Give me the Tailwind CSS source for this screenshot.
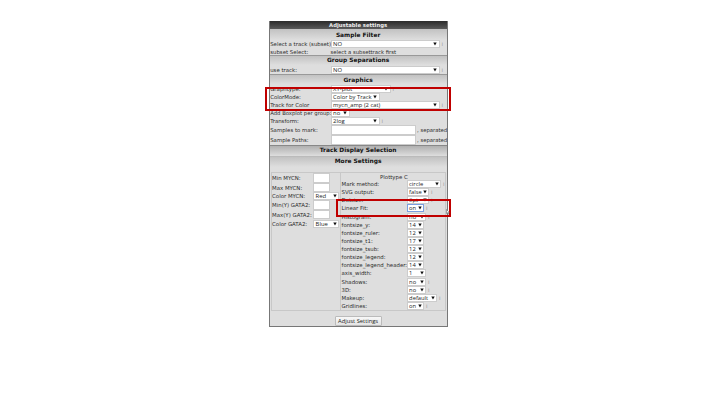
<!DOCTYPE html>
<html lang="en"><head><meta charset="utf-8"><title>Adjustable settings</title>
<script src="https://cdn.jsdelivr.net/npm/@tailwindcss/browser@4"></script></head>
<body class="bg-white w-[720px] h-[416px] overflow-hidden relative font-['DejaVu_Sans',sans-serif] text-[5.4px] leading-[8px] text-[#2c2c2c] whitespace-nowrap">
<svg width="0" height="0" class="absolute"><defs><symbol id="arrow" viewBox="0 0 4 4"><path d="M.3 .6H3.7L2 3.6Z" fill="#111"/></symbol></defs></svg>
<main class="ml-[268.6px] mt-[21px] w-[179px] h-[306px] border-x border-b border-[#777] bg-[#dedede] flex flex-col">
<h1 class="h-[8px] shrink-0 bg-linear-to-b from-[#2b2b2b] to-[#5a5a5a] text-[#eee] text-[5.3px] font-bold text-center leading-[9px]">Adjustable settings</h1>
<h2 class="h-[11px] shrink-0 bg-linear-to-b from-[#c2c2c2] to-[#dedede] text-[#111] text-[5.9px] font-bold text-center leading-[12px]">Sample Filter</h2>
<section class="h-[15px] shrink-0">
<div class="flex h-[8px] items-center"><label class="w-[61px] shrink-0 pl-[.6px]">Select a track (subset)</label><span class="w-[109px] h-[8px] shrink-0 bg-white border border-[#ccc] flex items-center justify-between pl-[1.5px] pr-[2px] text-[#222]"><b class="font-normal font-['Open_Sans',sans-serif] text-[5.9px]">NO</b><svg width="4" height="4"><use href="#arrow"/></svg></span><i class="not-italic text-[#999] pl-[2px]">i</i></div>
<div class="flex h-[7px] items-center"><span class="w-[61px] shrink-0 pl-[.6px]">subset Select:</span><span class="text-[5.3px]">select a subsettrack first</span></div>
</section>
<h2 class="h-[10px] shrink-0 border-t border-[#999] bg-linear-to-b from-[#c2c2c2] to-[#dedede] text-[#111] text-[5.9px] font-bold text-center leading-[9px]">Group Separations</h2>
<section class="h-[9px] shrink-0">
<div class="flex h-[9px] items-center"><label class="w-[61px] shrink-0 pl-[.6px]">use track:</label><span class="w-[109px] h-[8px] shrink-0 bg-white border border-[#ccc] flex items-center justify-between pl-[1.5px] pr-[2px] text-[#222]"><b class="font-normal font-['Open_Sans',sans-serif] text-[5.9px]">NO</b><svg width="4" height="4"><use href="#arrow"/></svg></span><i class="not-italic text-[#999] pl-[2px]">i</i></div>
</section>
<h2 class="h-[10px] shrink-0 border-t border-[#999] bg-linear-to-b from-[#c2c2c2] to-[#dedede] text-[#111] text-[5.9px] font-bold text-center leading-[10px]">Graphics</h2>
<section class="h-[61px] shrink-0 pt-px">
<div class="flex h-[8px] items-center"><label class="w-[61px] shrink-0 pl-[.6px]">Graphtype:</label><span class="w-[60px] h-[8px] shrink-0 bg-white border border-[#ccc] flex items-center justify-between pl-[1.5px] pr-[2px] text-[#222]"><b class="font-normal font-['Open_Sans',sans-serif] text-[5.9px]">XY-plot</b><svg width="4" height="4"><use href="#arrow"/></svg></span><i class="not-italic text-[#999] pl-[2px]">i</i></div>
<div class="flex h-[8px] items-center"><label class="w-[61px] shrink-0 pl-[.6px]">ColorMode:</label><span class="w-[49px] h-[8px] shrink-0 bg-white border border-[#ccc] flex items-center justify-between pl-[1.5px] pr-[2px] text-[#222]"><b class="font-normal font-['Open_Sans',sans-serif] text-[5.8px]">Color by Track</b><svg class="shrink-0" width="4" height="4"><use href="#arrow"/></svg></span></div>
<div class="flex h-[8px] items-center"><label class="w-[61px] shrink-0 pl-[.6px]">Track for Color</label><span class="w-[109px] h-[8px] shrink-0 bg-white border border-[#ccc] flex items-center justify-between pl-[1.5px] pr-[2px] text-[#222]"><b class="font-normal font-['Open_Sans',sans-serif] text-[5.8px]">mycn_amp (2 cat)</b><svg width="4" height="4"><use href="#arrow"/></svg></span><i class="not-italic text-[#999] pl-[2px]">i</i></div>
<div class="flex h-[8px] items-center"><label class="w-[61px] shrink-0 pl-[.6px] text-[5.3px]">Add Boxplot per group:</label><span class="w-[19px] h-[8px] shrink-0 bg-white border border-[#ccc] flex items-center justify-between pl-[1.5px] pr-[2px] text-[#222]"><b class="font-normal font-['Open_Sans',sans-serif] text-[5.9px]">no</b><svg width="4" height="4"><use href="#arrow"/></svg></span></div>
<div class="flex h-[8px] items-center"><label class="w-[61px] shrink-0 pl-[.6px]">Transform:</label><span class="w-[49px] h-[8px] shrink-0 bg-white border border-[#ccc] flex items-center justify-between pl-[1.5px] pr-[2px] text-[#222]"><b class="font-normal font-['Open_Sans',sans-serif] text-[5.9px]">2log</b><svg width="4" height="4"><use href="#arrow"/></svg></span><i class="not-italic text-[#999] pl-[2px]">i</i></div>
<div class="flex h-[10px] items-center"><label class="w-[61px] shrink-0 pl-[.6px]">Samples to mark:</label><span class="w-[85px] h-[10px] shrink-0 bg-white border border-[#ccc]"></span><span class="pl-[1.5px] text-[5.3px]">, separated</span></div>
<div class="flex h-[10px] items-center"><label class="w-[61px] shrink-0 pl-[.6px]">Sample Paths:</label><span class="w-[85px] h-[10px] shrink-0 bg-white border border-[#ccc]"></span><span class="pl-[1.5px] text-[5.3px]">, separated</span></div>
</section>
<h2 class="h-[11px] shrink-0 border-t border-[#888] bg-linear-to-b from-[#b0b0b0] to-[#dedede] text-[#111] text-[5.9px] font-bold text-center leading-[9px]">Track Display Selection</h2>
<h2 class="h-[11px] shrink-0 border-t border-[#bbb] bg-linear-to-b from-[#c2c2c2] to-[#dedede] text-[#111] text-[5.9px] font-bold text-center leading-[9px]">More Settings</h2>
<div class="mt-[5px] ml-[1.5px] w-[175px] h-[139px] shrink-0 border border-[#c8c8c8] flex">
<section class="w-[68px] shrink-0">
<div class="flex h-[10px] items-center"><label class="w-[41px] shrink-0">Min MYCN:</label><span class="w-[17px] h-[10px] shrink-0 bg-white border border-[#ccc]"></span></div>
<div class="flex h-[9px] items-center"><label class="w-[41px] shrink-0">Max MYCN:</label><span class="w-[17px] h-[9px] shrink-0 bg-white border border-[#ccc]"></span></div>
<div class="flex h-[8px] items-center"><label class="w-[41px] shrink-0">Color MYCN:</label><span class="w-[26px] h-[8px] shrink-0 bg-white border border-[#ccc] flex items-center justify-between pl-[1.5px] pr-px text-[#222]"><b class="font-normal font-['Open_Sans',sans-serif] text-[5.9px]">Red</b><svg width="4" height="4"><use href="#arrow"/></svg></span></div>
<div class="flex h-[10px] items-center"><label class="w-[41px] shrink-0">Min(Y) GATA2:</label><span class="w-[17px] h-[10px] shrink-0 bg-white border border-[#ccc]"></span></div>
<div class="flex h-[9px] items-center"><label class="w-[41px] shrink-0">Max(Y) GATA2:</label><span class="w-[17px] h-[9px] shrink-0 bg-white border border-[#ccc]"></span></div>
<div class="flex h-[9px] items-center"><label class="w-[41px] shrink-0">Color GATA2:</label><span class="w-[26px] h-[8px] shrink-0 bg-white border border-[#ccc] flex items-center justify-between pl-[1.5px] pr-px text-[#222]"><b class="font-normal font-['Open_Sans',sans-serif] text-[5.9px]">Blue</b><svg width="4" height="4"><use href="#arrow"/></svg></span></div>
</section>
<section id="plot" class="w-[105px] shrink-0 border-l border-[#c8c8c8]">
<h3 class="h-[7px] pl-[39px]">Plottype C</h3>
</section></div>
<button class="block mx-auto mt-[5px] w-[47px] h-[10px] shrink-0 border border-[#bbb] rounded-[1px] bg-linear-to-b from-[#f8f8f8] to-[#e4e4e4] font-['Open_Sans',sans-serif] text-[5.8px] leading-[8px] text-[#222]">Adjust Settings</button>
</main>
<div class="absolute left-[265px] top-[87px] w-[186px] h-[24px] border-2 border-[#c00000]"></div>
<div class="absolute left-[336px] top-[199px] w-[115px] h-[18px] border-2 border-[#c00000]"></div>
<svg class="absolute left-[446px] top-[209px]" width="4" height="6" viewBox="0 0 4 6"><path d="M.5 .5V4.5L1.4 3.7L2.1 5.3L2.8 5L2.1 3.5H3.4Z" fill="#fff" stroke="#555" stroke-width=".5"/></svg>
<script>
// label, value, select width, info marker
const rows=[["Mark method:","circle",34,1],["SVG output:","false",22,1],["Dotsize:","6pt",22,1],["Linear Fit:","on",17,1],["Histogram:","no",19,1],["fontsize_y:","14",17,0],["fontsize_ruler:","12",17,0],["fontsize_t1:","17",17,0],["fontsize_tsub:","12",17,0],["fontsize_legend:","12",17,0],["fontsize_legend_header:","14",17,0],["axis_width:","1",19,0],["Shadows:","no",19,1],["3D:","no",19,1],["Makeup:","default",30,1],["Gridlines:","on",17,1]];
document.getElementById('plot').insertAdjacentHTML('beforeend',rows.map(([l,v,w,i])=>`<div class="flex h-[8.14px] items-center"><label class="w-[66px] shrink-0 pl-[.4px]">${l}</label><span class="h-[8px] shrink-0 bg-white border ${l=="Linear Fit:"?"border-[#7a9fe0]":"border-[#ccc]"} flex items-center justify-between pl-px pr-px text-[#222]" style="width:${w}px"><b class="font-normal font-['Open_Sans',sans-serif] text-[5.8px]">${v}</b><svg class="shrink-0" width="4" height="4"><use href="#arrow"/></svg></span>${i?'<i class="not-italic text-[#999] pl-[2px]">i</i>':''}</div>`).join(''));
</script>
</body></html>
